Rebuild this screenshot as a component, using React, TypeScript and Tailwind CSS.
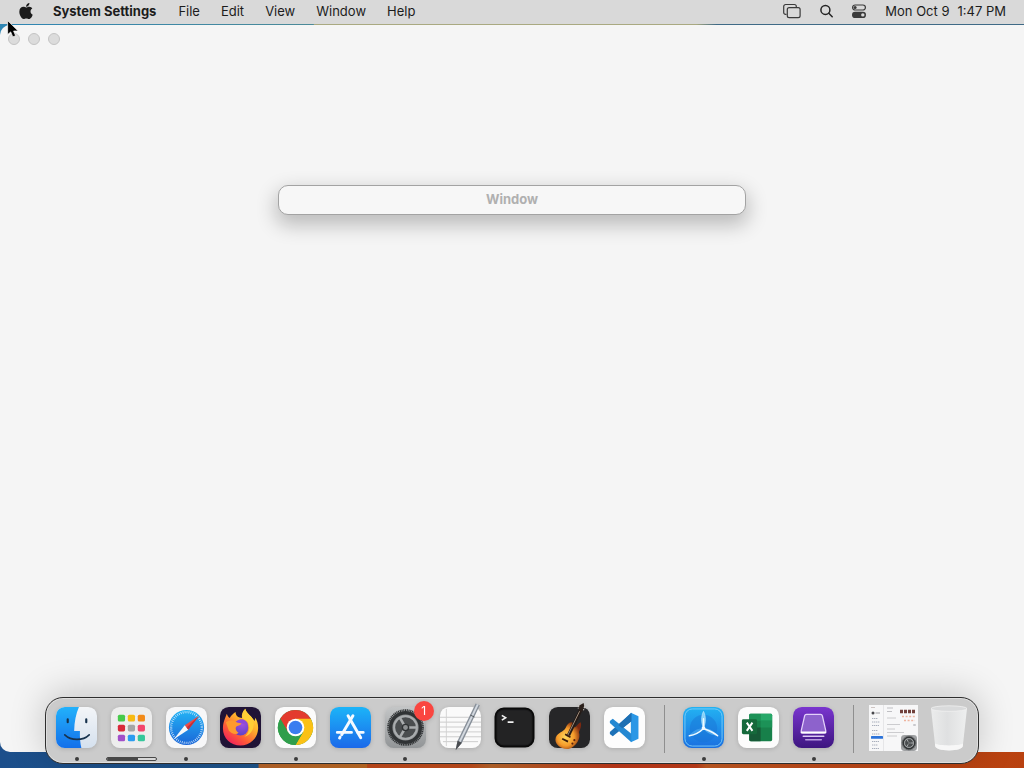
import React from "react";
import { FaApple } from "react-icons/fa";

const menus = ["File", "Edit", "View", "Window", "Help"];

const Finder = () => (
  <svg viewBox="0 0 42 42" className="size-full">
    <defs>
      <linearGradient id="finderBlue" x1="0" y1="0" x2="0" y2="1">
        <stop offset="0" stopColor="#22b1fb" />
        <stop offset="1" stopColor="#1470ea" />
      </linearGradient>
      <linearGradient id="finderPale" x1="0" y1="0" x2="0" y2="1">
        <stop offset="0" stopColor="#f3f5f8" />
        <stop offset="1" stopColor="#d5e1ee" />
      </linearGradient>
    </defs>
    <rect width="42" height="42" rx="9" fill="url(#finderPale)" />
    <path d="M9 0H23.5C20.5 7 18.8 15 18.6 24.5H24.5C24.3 31 24.8 37 26 42H9A9 9 0 0 1 0 33V9A9 9 0 0 1 9 0Z" fill="url(#finderBlue)" />
    <path d="M12 12.5v3M31 12.5v3" stroke="#17324d" strokeWidth="2.2" strokeLinecap="round" />
    <path d="M9 28.5C15.5 34.8 27.5 34.8 34 28.5" fill="none" stroke="#17324d" strokeWidth="1.7" strokeLinecap="round" />
  </svg>
);

const tiles = [
  ["#47ca4b", "#f7ba12", "#f28a18"],
  ["#d9293a", "#a5a5a5", "#f3456c"],
  ["#a14fc9", "#2b9cf0", "#35c79b"],
];

const Launchpad = () => (
  <svg viewBox="0 0 42 42" className="size-full">
    <rect width="42" height="42" rx="9" fill="#ededed" />
    {tiles.map((row, y) =>
      row.map((fill, x) => <rect key={fill} x={7 + x * 10.2} y={8 + y * 10.2} width="7.4" height="6.8" rx="1.6" fill={fill} />)
    )}
  </svg>
);

const Safari = () => (
  <svg viewBox="0 0 42 42" className="size-full">
    <defs>
      <linearGradient id="safariBlue" x1="0" y1="0" x2="0" y2="1">
        <stop offset="0" stopColor="#23b4f5" />
        <stop offset="1" stopColor="#1a66d8" />
      </linearGradient>
    </defs>
    <rect width="42" height="42" rx="9" fill="#f7f7f8" />
    <circle cx="21" cy="21" r="18" fill="url(#safariBlue)" />
    <circle cx="21" cy="21" r="15.8" fill="none" stroke="#e6f3fd" strokeWidth="2.4" strokeDasharray="0.7 1.36" />
    <path d="M34 9 19.2 18.8 22.8 23.2Z" fill="#ee4b45" />
    <path d="M8 33 19.2 18.8 22.8 23.2Z" fill="#f6f8fa" />
    <path d="M34 9 21 21 22.8 23.2Z" fill="#c5303a" />
  </svg>
);

const Firefox = () => (
  <svg viewBox="0 0 42 42" className="size-full">
    <defs>
      <linearGradient id="foxFlame" x1="0.9" y1="0.1" x2="0.25" y2="1">
        <stop offset="0" stopColor="#ffe141" />
        <stop offset="0.35" stopColor="#ffb02b" />
        <stop offset="0.7" stopColor="#ff5b37" />
        <stop offset="1" stopColor="#f01f5c" />
      </linearGradient>
      <radialGradient id="foxGlobe" cx="0.6" cy="0.25" r="0.8">
        <stop offset="0" stopColor="#a350e0" />
        <stop offset="1" stopColor="#5942c7" />
      </radialGradient>
    </defs>
    <rect width="42" height="42" rx="9" fill="#201336" />
    <path d="M3 22C3 15.5 5.5 11 7 7C7.5 9 8.5 10.5 10 11.2C11.5 8.3 14 6.3 16 5C15.8 7.6 17.5 10 20 10.8L22.5 11.2C21.8 7.4 23.5 4 26 1.8C26.5 5.8 31.5 8.6 33.5 12C34.5 12.6 35 13.8 35.2 14.4C36 13.4 36 12 35.7 10.8C38.2 13.7 39.3 18 39 22.5C38.4 32.4 30.7 39.4 21 39.4C11 39.4 3 32 3 22Z" fill="url(#foxFlame)" />
    <circle cx="21" cy="21.3" r="8" fill="url(#foxGlobe)" />
    <path d="M6 15.5C9.5 13 14 13.4 17 15.5C18.6 16.4 21 16.2 22 16.8C21.4 18.6 18.8 18.8 17.2 19.8C15.2 21 16 24.6 19 26.3C16.5 29 11 27 9 24Z" fill="#ff9a2e" />
    <path d="M18 14C22 10.8 28 13 29 19C28 17.6 26.5 17 25 17.2C22.8 16.5 20.5 16.2 18 15Z" fill="#8f49d8" />
    <path d="M26 1.8C22.8 5 22.5 8.6 23.5 12C27.5 13 30 16.5 30 21C30 25 28 28.5 25 30.5C32.5 28.5 36.6 20 33.5 12C31.5 8.6 26.5 5.8 26 1.8Z" fill="#ffcf36" />
  </svg>
);

const Chrome = () => (
  <svg viewBox="0 0 42 42" className="size-full">
    <rect width="42" height="42" rx="9" fill="#fbfbfb" />
    <circle cx="21" cy="21" r="18" fill="#2f9e4b" />
    <path d="M21 21 5.4 12A18 18 0 0 1 36.6 12L28.8 16.5Z" fill="#e33b2e" />
    <path d="M5.4 12 13.2 25.5 21 12.5Z" fill="#e33b2e" />
    <path d="M21 12H36.6A18 18 0 0 1 21 39L28.8 25.5Z" fill="#fbc116" />
    <path d="M5.4 12A18 18 0 0 0 21 39L28.8 25.5 13.2 25.5Z" fill="#2f9e4b" />
    <circle cx="21" cy="21" r="9" fill="#fff" />
    <circle cx="21" cy="21" r="7" fill="#3a7df0" />
  </svg>
);

const AppStore = () => (
  <svg viewBox="0 0 42 42" className="size-full">
    <defs>
      <linearGradient id="storeBlue" x1="0" y1="0" x2="0" y2="1">
        <stop offset="0" stopColor="#1cb4f8" />
        <stop offset="1" stopColor="#1b69ea" />
      </linearGradient>
    </defs>
    <rect width="42" height="42" rx="9" fill="url(#storeBlue)" />
    <g stroke="#f5faff" strokeWidth="3" strokeLinecap="round">
      <path d="M23.5 9 12 28.5" />
      <path d="M18.5 9 31.5 31.5" />
      <path d="M7.5 26H22M28.5 26H34" />
      <path d="M10.3 30.8 9.8 31.8" />
    </g>
  </svg>
);

const Gear = () => (
  <>
    <circle cx="21" cy="21" r="17.8" fill="none" stroke="#303335" strokeWidth="2" strokeDasharray="1.2 0.64" />
    <circle cx="21" cy="21" r="15.2" fill="#8d9092" stroke="#303335" strokeWidth="3.6" />
    <circle cx="21" cy="21" r="11.6" fill="#4a4d4f" stroke="#a9acae" strokeWidth="2" />
    <path d="M21 21 15.2 11M21 21H32.5M21 21 15.2 31" stroke="#a9acae" strokeWidth="2.6" />
    <circle cx="21" cy="21" r="3.2" fill="#8d9092" stroke="#303335" strokeWidth="1.4" />
  </>
);

const Settings = () => (
  <svg viewBox="0 0 42 42" className="size-full">
    <defs>
      <linearGradient id="settingsGrey" x1="0" y1="0" x2="0" y2="1">
        <stop offset="0" stopColor="#c3c5c6" />
        <stop offset="1" stopColor="#929597" />
      </linearGradient>
    </defs>
    <rect width="42" height="42" rx="9" fill="url(#settingsGrey)" />
    <Gear />
  </svg>
);

const TextEdit = () => (
  <svg viewBox="0 0 42 42" className="size-full overflow-visible">
    <rect width="42" height="42" rx="9" fill="#fafafa" />
    <path d="M0 10.5H42M0 15.5H42M0 20.5H42M0 25.5H42M0 30.5H42M3 35.5H39" stroke="#c6c6c6" strokeWidth="0.9" />
    <path d="M6.5 2V40" stroke="#d0d0d0" strokeWidth="0.9" />
    <path d="M36.5-3.5 40.8-1.7 22.5 36.5 16 44.2 18 34.5Z" fill="#878f99" />
    <path d="M37.8-3 39.6-2.2 21 36 19.2 35.4Z" fill="#d3d9e0" />
    <path d="M18 34.5 22.5 36.5 16 44.2Z" fill="#4a4d51" />
    <path d="M31 8.3 35.2 10.2" stroke="#50565c" strokeWidth="1" />
  </svg>
);

const Terminal = () => (
  <svg viewBox="0 0 42 42" className="size-full">
    <rect x="1.5" y="1.5" width="39" height="39" rx="8.5" fill="#1d1d1e" stroke="#0a0a0a" strokeWidth="2" />
    <rect x="3.5" y="3.5" width="35" height="35" rx="6.5" fill="#232324" />
    <path d="M8 8.5 12 11 8 13.5M14 15.5H20" fill="none" stroke="#f2f2f2" strokeWidth="1.6" />
  </svg>
);

const GarageBand = () => (
  <svg viewBox="0 0 42 42" className="size-full overflow-visible">
    <defs>
      <radialGradient id="guitarBody" cx="0.4" cy="0.55" r="0.6">
        <stop offset="0" stopColor="#ffd95c" />
        <stop offset="0.55" stopColor="#f59a2a" />
        <stop offset="1" stopColor="#7c2810" />
      </radialGradient>
    </defs>
    <rect width="42" height="42" rx="9" fill="#262628" />
    <path d="M7 31C9.5 25.5 14.5 26 17 21.5C18.5 17.5 21.5 14.5 24 16C25.6 17.4 25 20 26.5 21C28.5 19 30 16.8 32.5 15.5C33.6 18.5 32.2 22.5 30.6 25.5C33 32 28 40.5 20 43C13 44 4.5 38 7 31Z" fill="url(#guitarBody)" />
    <path d="M20 29 32.5 3" stroke="#241a16" strokeWidth="3.4" />
    <path d="M18.5 30.5 32.5 2" stroke="#a08e7d" strokeWidth="1" />
    <path d="M31-1.5 35.5-4 36-1 33.8 5 30.5 4Z" fill="#2c211c" />
    <path d="M30.3 1.2 29.5 1M30.9-.8 30-1M35 2.5 36 3M35.7.5 36.8 1" stroke="#d8d0c6" strokeWidth="1.1" />
    <path d="M13.5 32.5 19.5 35.5M16.5 28 22 31" stroke="#3a1b0c" strokeWidth="1.8" />
    <circle cx="26" cy="34" r="1.1" fill="#5b230d" />
    <circle cx="24" cy="37.5" r="1.1" fill="#5b230d" />
  </svg>
);

const VSCode = () => (
  <svg viewBox="0 0 42 42" className="size-full">
    <rect width="42" height="42" rx="9" fill="#fdfdfd" />
    <path d="M27.5 6 35.3 9.6V32.4L27.5 36Z" fill="#2a97e6" />
    <path d="M28 6V14.6L9 30 6 27.6V25.5Z" fill="#1d72b8" />
    <path d="M28 36V27.4L9 12 6 14.4V16.5Z" fill="#2488d2" />
    <path d="M28 6V14.6L18.8 21.8 14.8 18.6Z" fill="#1d6fb3" />
  </svg>
);

const TestFlight = () => (
  <svg viewBox="0 0 42 42" className="size-full">
    <defs>
      <linearGradient id="flightBlue" x1="0" y1="0" x2="0" y2="1">
        <stop offset="0" stopColor="#23b2f2" />
        <stop offset="1" stopColor="#1b6fe0" />
      </linearGradient>
    </defs>
    <rect width="42" height="42" rx="9" fill="url(#flightBlue)" />
    <rect x="2" y="2" width="38" height="38" rx="7.5" fill="none" stroke="#7fd0fa" strokeWidth="0.9" />
    <circle cx="21" cy="22" r="14" fill="#1874d4" opacity="0.45" />
    <path d="M21 21.5C18.4 16 18.6 9 21 4.5C23.4 9 23.6 16 21 21.5Z" fill="#83d2f9" stroke="#c3e9fd" strokeWidth="0.7" />
    <path d="M21 21.5C18.8 26.5 12.5 29 6.5 29.5C9 25 15.4 21.6 21 21.5Z" fill="#3b9bea" />
    <path d="M21 21.5C23.2 26.5 29.5 29 35.5 29.5C33 25 26.6 21.6 21 21.5Z" fill="#4ca6ee" />
    <path d="M21 22C16.5 26.5 12 28.6 6.5 29.5M21 22C26 24 31.5 26 35.5 29.5M21 22V12" fill="none" stroke="#f1faff" strokeWidth="1.5" strokeLinecap="round" />
    <circle cx="21" cy="21.6" r="1.9" fill="#eef9ff" />
  </svg>
);

const Excel = () => (
  <svg viewBox="0 0 42 42" className="size-full">
    <rect width="42" height="42" rx="9" fill="#fcfcfc" />
    <rect x="11.5" y="7" width="23.5" height="28" rx="1.5" fill="#17804a" />
    <path d="M13 7H23.2V14H11.5V8.5A1.5 1.5 0 0 1 13 7Z" fill="#1c9257" />
    <path d="M23.2 7H33.5A1.5 1.5 0 0 1 35 8.5V14H23.2Z" fill="#27a869" />
    <path d="M23.2 14H35V21H23.2Z" fill="#1c9257" />
    <path d="M11.5 21H23.2V35H13A1.5 1.5 0 0 1 11.5 33.5Z" fill="#165a37" />
    <rect x="4" y="12.5" width="15.5" height="15.5" rx="1.5" fill="#15693b" />
    <path d="M9 16 14.8 24.5M14.8 16 9 24.5" stroke="#fff" strokeWidth="2" />
  </svg>
);

const Clipboard = () => (
  <svg viewBox="0 0 42 42" className="size-full">
    <defs>
      <linearGradient id="stackPurple" x1="0" y1="0" x2="0" y2="1">
        <stop offset="0" stopColor="#7a35cf" />
        <stop offset="1" stopColor="#3d1680" />
      </linearGradient>
    </defs>
    <rect width="42" height="42" rx="9" fill="url(#stackPurple)" />
    <path d="M13.8 7.5H28.2A2 2 0 0 1 30.1 9L33.6 24.5A1.7 1.7 0 0 1 32 26.5H10A1.7 1.7 0 0 1 8.4 24.5L11.9 9A2 2 0 0 1 13.8 7.5Z" fill="#8d62cc" stroke="#e3d0fa" strokeWidth="1.3" />
    <path d="M8.8 26.2H33.2" stroke="#fff" strokeWidth="2" strokeLinecap="round" />
    <path d="M10.5 30H31.5" stroke="#dccaf4" strokeWidth="1.6" strokeLinecap="round" />
    <path d="M13 33.6H29" stroke="#b89bdf" strokeWidth="1.4" strokeLinecap="round" />
  </svg>
);

const Trash = () => (
  <svg viewBox="0 0 38 46" className="h-[46px] w-[38px]">
    <defs>
      <linearGradient id="trashBody" x1="0" y1="0" x2="1" y2="0">
        <stop offset="0" stopColor="#ebecec" />
        <stop offset="0.45" stopColor="#dfe0e1" />
        <stop offset="1" stopColor="#eeefef" />
      </linearGradient>
    </defs>
    <path d="M1 3.5 5.2 41C5.6 43.6 11 45.4 19 45.4S32.4 43.6 32.8 41L37 3.5Z" fill="url(#trashBody)" />
    <path d="M5 38.5C9 41 29 41 33 38.5L32.8 41C32.4 43.6 27 45.4 19 45.4S5.6 43.6 5.2 41Z" fill="#f7f7f7" />
    <ellipse cx="19" cy="3.6" rx="18" ry="2.8" fill="#d9dadb" stroke="#f0f0f0" strokeWidth="0.8" />
  </svg>
);

const SettingsThumbnail = () => (
  <svg viewBox="0 0 49 46" className="h-[46px] w-[49px]">
    <rect width="49" height="46" fill="#f7f7f8" />
    <path d="M14.5 0V46" stroke="#e1e1e3" strokeWidth="0.8" />
    <path d="M2 2.5H6" stroke="#cfc6c4" strokeWidth="1" />
    <circle cx="4" cy="8" r="1.5" fill="#47474b" />
    <path d="M6.5 8H11" stroke="#9b9ba0" />
    <path d="M3 13.5H9M3 17H11M3 20.5H10M3 25.5H9M3 29H11M3 36.5H10M3 40H9M3 43.5H10" stroke="#a9afbc" strokeWidth="1" strokeDasharray="1.4 0.6" />
    <rect x="2" y="31" width="12" height="2.8" rx="0.6" fill="#2b73da" />
    <path d="M18 3H24M18 6.5H23" stroke="#bfbfc3" />
    <path d="M31 6.5H47" stroke="#71403b" strokeWidth="3.6" strokeDasharray="3 1" />
    <path d="M33 11.5H47M35 15.5H46" stroke="#eeb49e" strokeWidth="1.6" strokeDasharray="2 1.6" />
    <path d="M18 13H27M18 19.5H31M18 24H26M18 27.5H35M18 31H28" stroke="#c6c6ca" strokeWidth="0.9" />
    <rect x="44" y="19" width="3" height="2" rx="1" fill="#c9c9cd" />
    <svg x="32" y="30" width="16" height="16" viewBox="0 0 42 42">
      <rect width="42" height="42" rx="9" fill="#9fa1a3" />
      <Gear />
    </svg>
  </svg>
);

type App = {
  name: string;
  icon: React.ReactNode;
  running?: boolean;
  progress?: number;
  badge?: string;
};

const apps: App[] = [
  { name: "Finder", icon: <Finder />, running: true },
  { name: "Launchpad", icon: <Launchpad />, progress: 63 },
  { name: "Safari", icon: <Safari />, running: true },
  { name: "Firefox", icon: <Firefox /> },
  { name: "Google Chrome", icon: <Chrome />, running: true },
  { name: "App Store", icon: <AppStore /> },
  { name: "System Settings", icon: <Settings />, running: true, badge: "1" },
  { name: "TextEdit", icon: <TextEdit /> },
  { name: "Terminal", icon: <Terminal /> },
  { name: "GarageBand", icon: <GarageBand /> },
  { name: "Visual Studio Code", icon: <VSCode /> },
];

const recents: App[] = [
  { name: "TestFlight", icon: <TestFlight />, running: true },
  { name: "Microsoft Excel", icon: <Excel /> },
  { name: "Clipboard", icon: <Clipboard />, running: true },
];

const DockItem = ({ app }: { app: App }) => (
  <li className="flex w-[41px] flex-col items-center gap-[9px]">
    <button type="button" aria-label={app.name} className="relative size-[41px] drop-shadow-sm">
      {app.icon}
      {app.badge && (
        <span className="absolute -top-1.5 -right-2 flex size-5 items-center justify-center rounded-full bg-[#fa4640] text-xs text-white">
          {app.badge}
        </span>
      )}
    </button>
    {app.running && <span className="size-1 rounded-full bg-[#3c3c3c]" />}
    {app.progress && (
      <div className="h-1 w-[51px] shrink-0 overflow-hidden rounded-xs border border-[#484848] bg-[#d8d8d8]">
        <div className="h-full bg-[#484848]" style={{ width: `${app.progress}%` }} />
      </div>
    )}
  </li>
);

const MenuBar = () => (
  <header className="flex h-6 items-center justify-between bg-[#d9d9d9] pr-[18px] pb-0.5 pl-5 text-[13px] leading-4 text-[#1c1c1c]">
    <nav className="flex items-center gap-[21px]">
      <button type="button" aria-label="Apple">
        <FaApple className="h-4 w-3 scale-115" />
      </button>
      <button type="button" className="mr-px font-bold">System Settings</button>
      {menus.map((menu) => (
        <button key={menu} type="button">{menu}</button>
      ))}
    </nav>
    <div className="flex items-center">
      <button type="button" aria-label="Screen Mirroring" className="mr-[19px]">
        <svg viewBox="0 0 18 16" className="h-4 w-[18px]" fill="none" stroke="#3a3a3a" strokeWidth="1.2">
          <path d="M3.5 11.4H2.6A1.9 1.9 0 0 1 .7 9.5V3.4A1.9 1.9 0 0 1 2.6 1.5H11.4A1.9 1.9 0 0 1 13.3 3.4V4.4" />
          <rect x="4.3" y="4.6" width="12.8" height="10" rx="1.9" />
        </svg>
      </button>
      <button type="button" aria-label="Spotlight" className="mr-[19px]">
        <svg viewBox="0 0 13 14" className="h-3.5 w-[13px]" fill="none" stroke="#242424" strokeWidth="1.5" strokeLinecap="round">
          <circle cx="5.4" cy="5.9" r="4.5" />
          <path d="M8.8 9.3 12.2 12.8" />
        </svg>
      </button>
      <button type="button" aria-label="Control Center" className="mr-[19px]">
        <svg viewBox="0 0 14 14" className="size-3.5">
          <rect x="0.6" y="1" width="12.8" height="5" rx="2.5" fill="none" stroke="#3a3a3a" strokeWidth="1.2" />
          <circle cx="3.1" cy="3.5" r="1.5" fill="#3a3a3a" />
          <rect x="0" y="7.8" width="14" height="6.2" rx="3.1" fill="#3a3a3a" />
          <circle cx="10.8" cy="10.9" r="1.7" fill="#d9d9d9" />
        </svg>
      </button>
      <time className="flex gap-2">
        <span>Mon Oct 9</span>
        <span>1:47 PM</span>
      </time>
    </div>
  </header>
);

const Dock = () => (
  <nav
    aria-label="Dock"
    className="absolute inset-x-[45px] bottom-1 flex items-start rounded-[18px] border border-[#2e2e2e] bg-[#cbcbcb] pt-[7px] pr-2 pb-0.5 pl-2.5 shadow-[inset_0_0_0_1px_#dedede,0_-4px_36px_rgba(0,0,0,0.2)]"
  >
    <ul className="flex flex-1 justify-between pt-0.5">
      {apps.map((app) => <DockItem key={app.name} app={app} />)}
    </ul>
    <span className="mr-[18px] ml-[19px] h-12 w-px bg-[#8f8f8f]" />
    <ul className="flex w-[151px] justify-between pt-0.5">
      {recents.map((app) => <DockItem key={app.name} app={app} />)}
    </ul>
    <span className="mr-[15px] ml-[19px] h-12 w-px bg-[#8f8f8f]" />
    <div className="flex gap-3 pr-0.5">
      <button type="button" aria-label="System Settings window"><SettingsThumbnail /></button>
      <button type="button" aria-label="Trash"><Trash /></button>
    </div>
  </nav>
);

const Desktop = () => {
  return (
    <div className="relative flex h-screen flex-col overflow-hidden bg-[linear-gradient(90deg,#1c4f8b_0%,#1f558c_25.2%,#b8652a_25.3%,#bc6a24_35.8%,#c24a1c_35.9%,#c04c1c_46%,#b8652a_48%,#c0391a_60%,#bf3c1a_68%,#c25a22_69%,#c04a1a_80%,#b9410f_100%)] font-['Inter','Liberation_Sans',sans-serif]">
      <MenuBar />
      <div className="flex flex-1 flex-col bg-[linear-gradient(90deg,#2f86b4_0%,#4c8a98_30.6%,#a9a981_30.7%,#a9a981_68%,#3f6a86_70%,#3f6a86_100%)] bg-[length:100%_20px] bg-no-repeat pt-px">
        <main className="mb-4 flex-1 rounded-l-[10px] bg-[#f5f5f5] px-2 pt-2">
          <div className="flex gap-2">
            <button type="button" aria-label="Close" className="size-3 rounded-full border border-[#c4c4c4] bg-[#dcdcdc]" />
            <button type="button" aria-label="Minimize" className="size-3 rounded-full border border-[#c4c4c4] bg-[#dcdcdc]" />
            <button type="button" aria-label="Zoom" className="size-3 rounded-full border border-[#c4c4c4] bg-[#dcdcdc]" />
          </div>
          <section className="mx-auto mt-[140px] flex h-[30px] w-[468px] max-w-full items-center justify-center rounded-[10px] border border-[#a3a3a3] bg-[#f7f7f7] pb-0.5 shadow-[0_8px_20px_2px_rgba(0,0,0,0.24)]">
            <h1 className="text-[13px] leading-4 font-bold text-[#b0b0b0]">Window</h1>
          </section>
        </main>
      </div>
      <Dock />
      <svg viewBox="0 0 12 18" className="absolute top-5 left-[7px] h-[18px] w-3">
        <path d="M.6.6V14.6L3.7 11.9 5.8 16.9 8.6 15.7 6.6 11H11.2Z" fill="#000" stroke="#fff" strokeWidth="0.7" />
      </svg>
    </div>
  );
};

export default Desktop;
